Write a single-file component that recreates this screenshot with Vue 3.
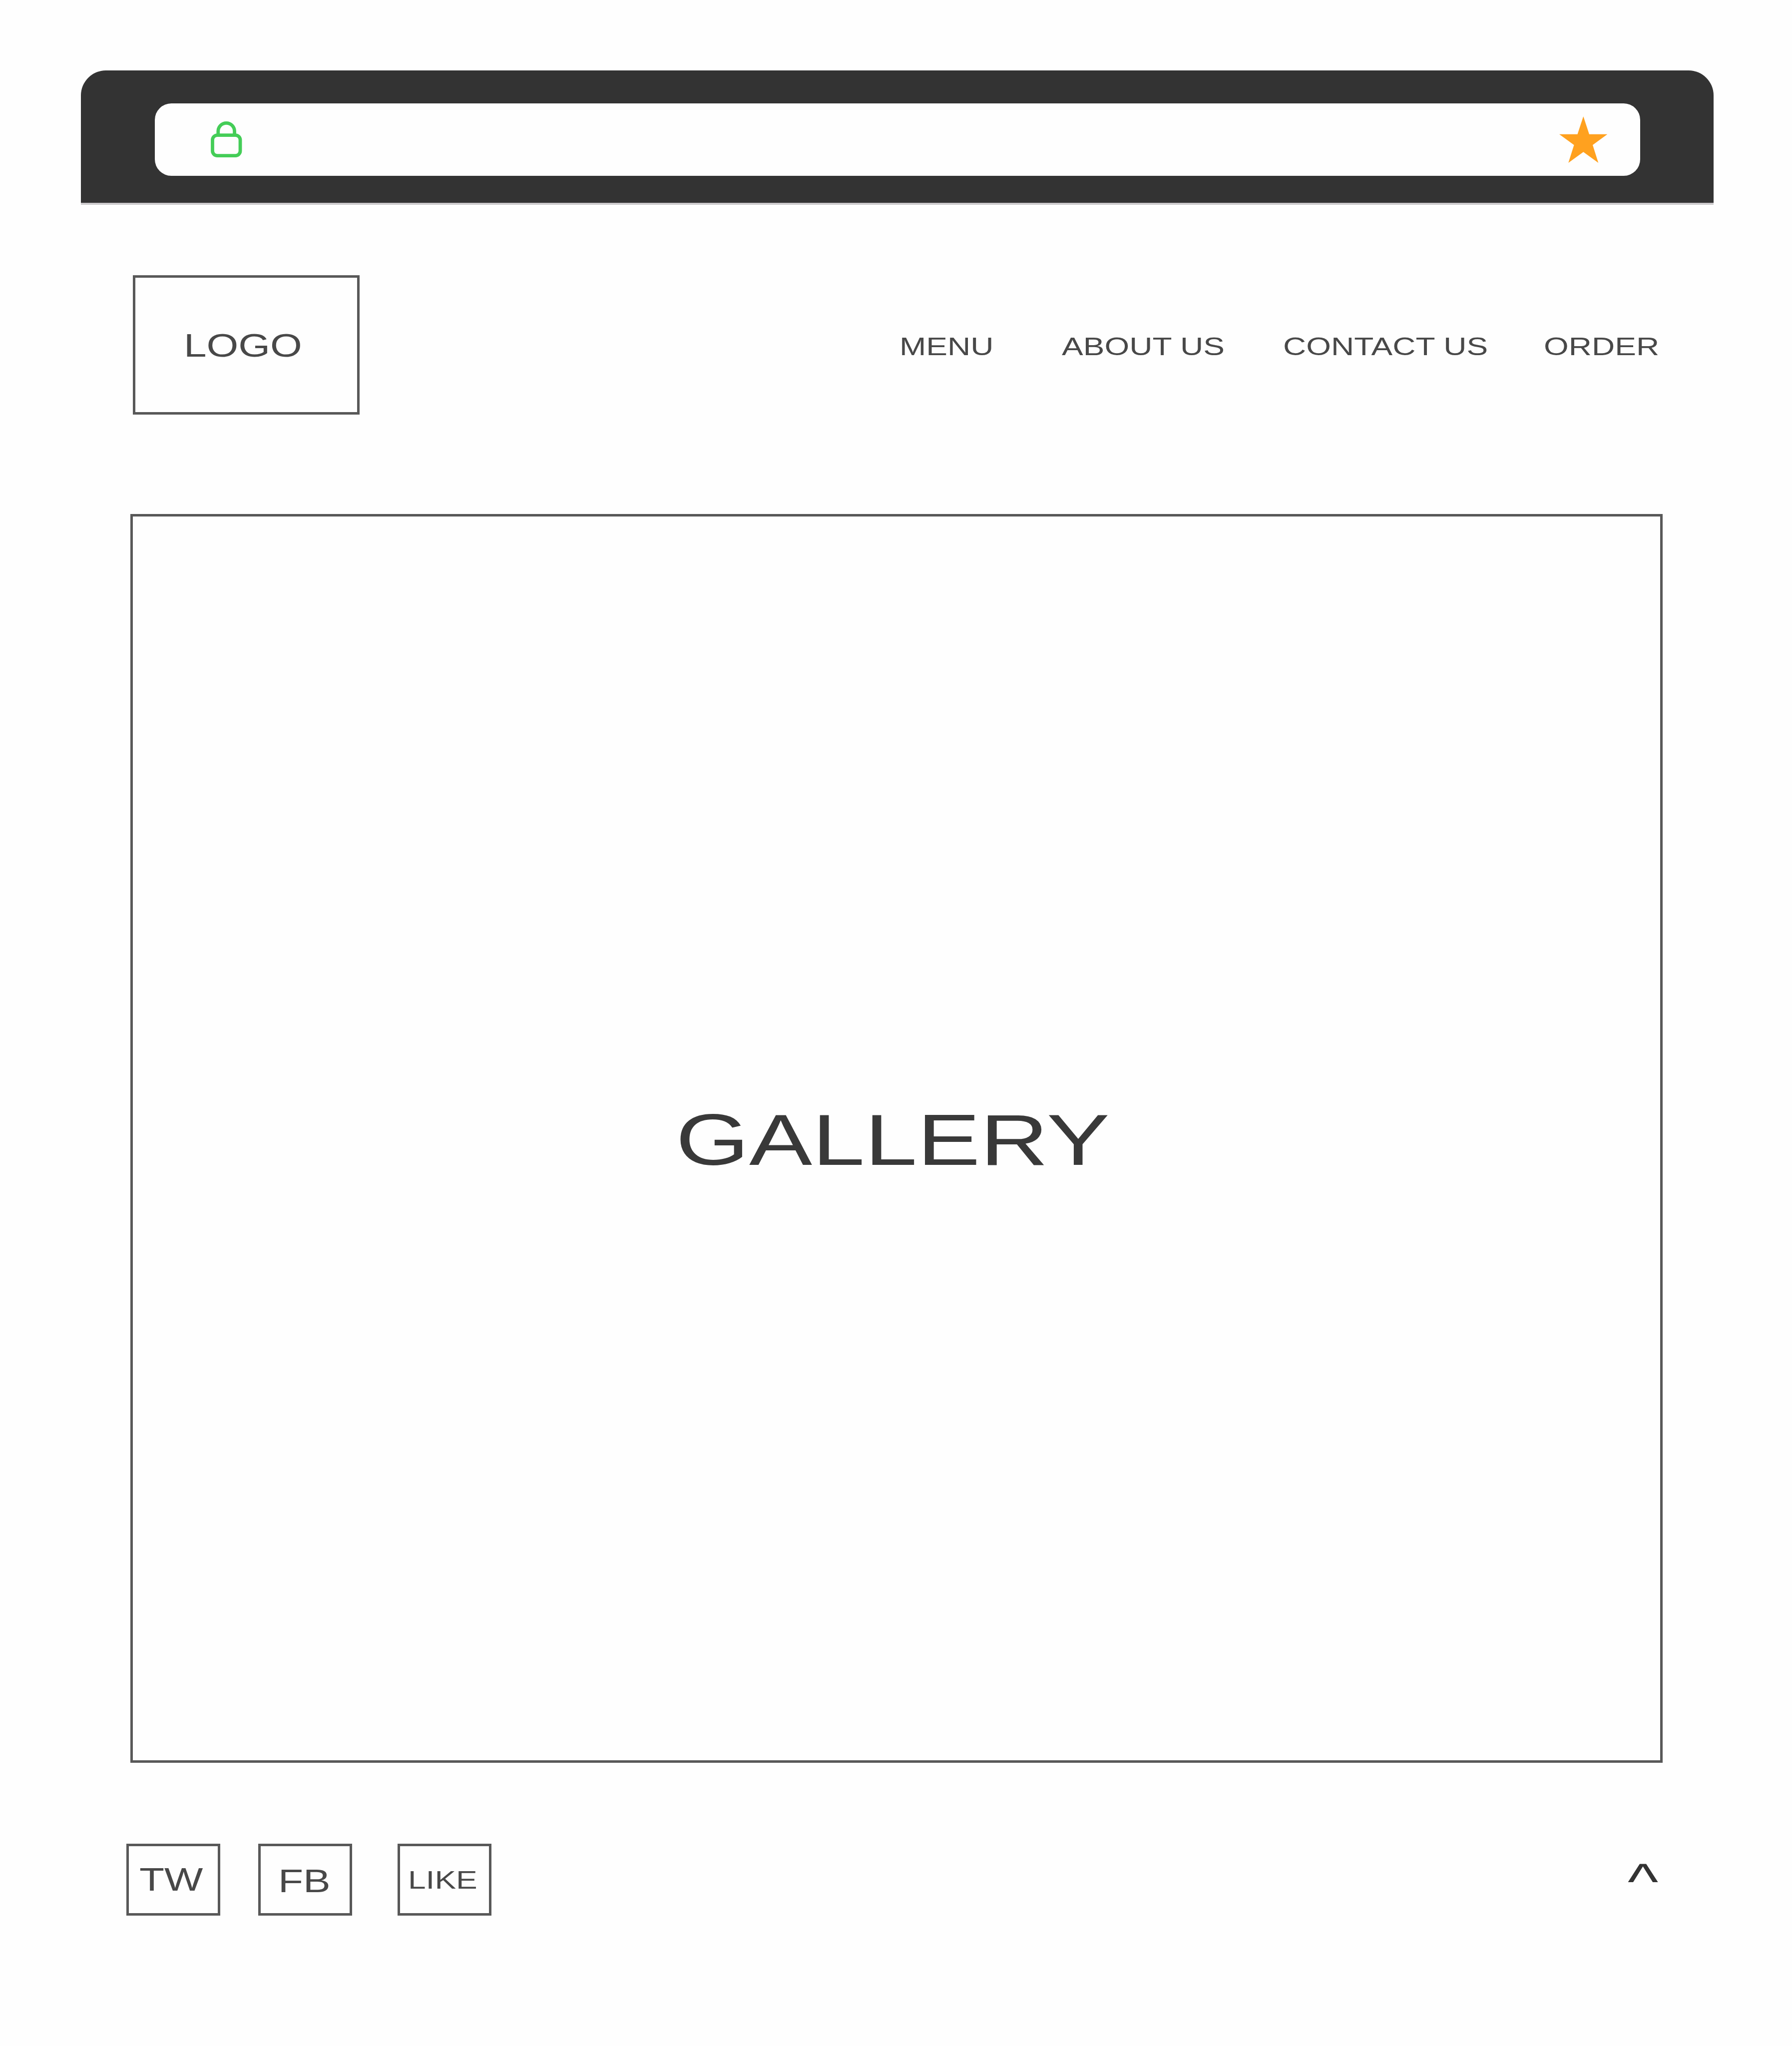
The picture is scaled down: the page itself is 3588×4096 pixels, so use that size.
<script setup>
const links = [
  { label: 'MENU', name: 'menu' },
  { label: 'ABOUT US', name: 'about' },
  { label: 'CONTACT US', name: 'contact' },
  { label: 'ORDER', name: 'order' },
]
const socials = [
  { label: 'TW', name: 'tw' },
  { label: 'FB', name: 'fb' },
  { label: 'LIKE', name: 'like' },
]
</script>

<template>
  <div class="page">
    <div class="browser">
      <div class="address">
        <svg class="lock" viewBox="0 0 72 83" fill="none" stroke="#44cd57" stroke-width="7.8">
          <rect x="4" y="31.9" width="64" height="47.2" rx="11" />
          <path d="M17 32V22.6a18.9 18.7 0 0 1 37.8 0V32" />
        </svg>
        <svg class="star" viewBox="0 0 111 107" fill="#ffa11f">
          <path d="M55.5 0L69 41H111L77 66L90 107L55.5 82L21 107L34 66L0 41H42Z" />
        </svg>
      </div>
    </div>

    <header class="top">
      <div class="box logo"><span class="text large">LOGO</span></div>
      <nav class="nav">
        <a v-for="l in links" :key="l.name" :class="['link', l.name]"><span class="text small">{{ l.label }}</span></a>
      </nav>
    </header>

    <main class="box gallery"><span class="text title">GALLERY</span></main>

    <footer class="footer">
      <div v-for="s in socials" :key="s.name" :class="['box', 'social', s.name]">
        <span :class="['text', s.name === 'like' ? 'small' : 'large']">{{ s.label }}</span>
      </div>
      <a class="up"><span class="text caret">^</span></a>
    </footer>
  </div>
</template>

<style>
body {
  margin: 0;
  background: #fefefe;
}
</style>

<style scoped>
.page {
  box-sizing: border-box;
  width: 3588px;
  height: 4096px;
  padding-top: 140.5px;
  overflow: hidden;
  background: #fefefe;
  font-family: "Liberation Sans", Arial, sans-serif;
  color: #484848;
}
.page * {
  box-sizing: border-box;
}
.browser {
  width: 3269px;
  height: 265px;
  margin-left: 162px;
  padding: 66px 147px 0 147.5px;
  border-radius: 50px 50px 0 0;
  background: #333;
  box-shadow: 0 4px 0 #cccacc;
}
.address {
  display: flex;
  justify-content: space-between;
  height: 145px;
  padding: 0 66px 0 112.5px;
  border-radius: 33px;
  background: #fefefe;
}
.lock {
  width: 62.5px;
  height: 72px;
  margin-top: 36.5px;
}
.star {
  width: 96.5px;
  height: 93px;
  margin-top: 26px;
}
.box {
  border: 5px solid #585858;
}
.text {
  display: block;
  line-height: 1;
  white-space: nowrap;
  transform: scaleX(1.28);
  transform-origin: 0 0;
}
.large {
  font-size: 64px;
}
.small {
  font-size: 50px;
}
.top {
  display: flex;
  margin: 145px 0 0 265.5px;
}
.logo {
  width: 454px;
  height: 279px;
  padding: 104px 0 0 97.5px;
}
.nav {
  display: flex;
  margin-left: 1081px;
  padding-top: 118px;
}
.menu {
  width: 325px;
}
.about {
  width: 443px;
}
.contact {
  width: 522px;
}
.order {
  width: 230px;
}
.gallery {
  width: 3068px;
  height: 2500px;
  margin: 199.5px 0 0 261px;
  padding: 1175.5px 0 0 1086.5px;
}
.title {
  font-size: 145px;
  color: #393939;
  transform: scaleX(1.304);
}
.footer {
  display: flex;
  margin: 162px 0 0 252.5px;
}
.social {
  width: 188px;
  height: 143.5px;
}
.tw {
  margin-right: 76.5px;
  padding: 34.5px 0 0 21.5px;
}
.fb {
  margin-right: 91px;
  padding: 38px 0 0 34.5px;
}
.like {
  padding: 43px 0 0 16px;
}
.up {
  margin: 25px 0 0 2274.5px;
}
.caret {
  font-size: 102px;
  color: #333;
}
</style>
